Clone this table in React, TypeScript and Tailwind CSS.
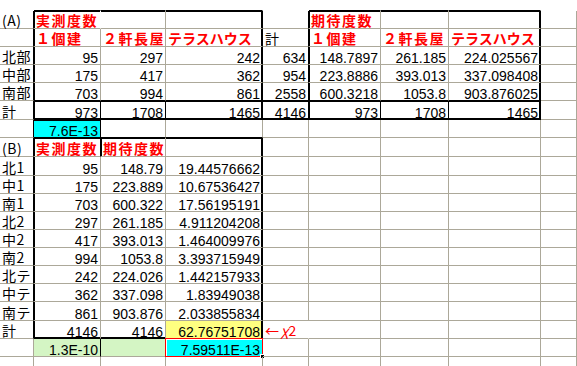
import React from "react";

type Col = "g" | "k" | "n";
interface Spec {
  text?: string;
  kind?: "num" | "jp" | "hdr" | "hdrk" | "note";
  rc?: Col;
  bc?: Col;
  sh?: string;
  bg?: string;
  sel?: boolean;
}

const SH: Record<string, string> = {
  "": "",
  t: "shadow-[inset_0_1px_0_#000]",
  l: "shadow-[inset_1px_0_0_#000]",
  b: "shadow-[inset_0_-1px_0_#000]",
  r: "shadow-[inset_-1px_0_0_#000]",
  tl: "shadow-[inset_1px_1px_0_#000]",
  tr: "shadow-[inset_-1px_1px_0_#000]",
  lb: "shadow-[inset_1px_-1px_0_#000]",
  rb: "shadow-[inset_-1px_-1px_0_#000]",
  tb: "shadow-[inset_0_1px_0_#000,inset_0_-1px_0_#000]",
  lr: "shadow-[inset_1px_0_0_#000,inset_-1px_0_0_#000]",
  tlb: "shadow-[inset_1px_1px_0_#000,inset_0_-1px_0_#000]",
  tbr: "shadow-[inset_-1px_1px_0_#000,inset_0_-1px_0_#000]",
  tlr: "shadow-[inset_1px_1px_0_#000,inset_-1px_0_0_#000]",
  lbr: "shadow-[inset_1px_-1px_0_#000,inset_-1px_0_0_#000]",
  tlbr: "shadow-[inset_0_0_0_1px_#000]",
};

const RC: Record<Col, string> = {
  g: "border-r-[#aca899]",
  k: "border-r-black",
  n: "border-r-transparent",
};
const BC: Record<Col, string> = {
  g: "border-b-[#aca899]",
  k: "border-b-black",
  n: "border-b-transparent",
};

const num = (text: string, o: Spec = {}): Spec => ({ text, kind: "num", ...o });
const jp = (text: string, o: Spec = {}): Spec => ({ text, kind: "jp", ...o });
const hd = (text: string, o: Spec = {}): Spec => ({ text, kind: "hdr", ...o });
const hk = (text: string, o: Spec = {}): Spec => ({ text, kind: "hdrk", ...o });

const YELLOW = "bg-[#ffff80]";
const GREEN = "bg-[#d4f5c4]";
const CYAN = "bg-[#00ffff]";

const rows: Spec[][] = [];

rows.push([
  { rc: "n", bc: "n" },
  { rc: "n", bc: "k" },
  { rc: "n", bc: "k" },
  { rc: "n", bc: "k" },
  { rc: "n", bc: "n" },
  { rc: "n", bc: "k" },
  { rc: "n", bc: "k" },
  { rc: "n", bc: "k" },
  { rc: "n", bc: "n" },
]);

rows.push([
  jp("(A)", { rc: "k" }),
  hd("実測度数", { rc: "n", sh: "tl" }),
  { sh: "t" },
  { sh: "tr", rc: "k" },
  { rc: "k" },
  hd("期待度数", { sh: "tl" }),
  { sh: "t" },
  { sh: "tr", rc: "k" },
  {},
]);

rows.push([
  { rc: "k" },
  hd("１個建", { sh: "l" }),
  hd("２軒長屋"),
  hk("テラスハウス", { sh: "r", rc: "k" }),
  jp("計", { rc: "k" }),
  hd("１個建", { sh: "l" }),
  hd("２軒長屋"),
  hk("テラスハウス", { sh: "r", rc: "k" }),
  {},
]);

const topData = [
  ["北部", "95", "297", "242", "634", "148.7897", "261.185", "224.025567"],
  ["中部", "175", "417", "362", "954", "223.8886", "393.013", "337.098408"],
  ["南部", "703", "994", "861", "2558", "600.3218", "1053.8", "903.876025"],
];
topData.forEach((d, i) => {
  const last = i === topData.length - 1;
  const b: Col = last ? "k" : "g";
  rows.push([
    jp(d[0], { rc: "k" }),
    num(d[1], { sh: "l", bc: b }),
    num(d[2], { bc: b }),
    num(d[3], { sh: "r", rc: "k", bc: b }),
    num(d[4], { rc: "k", bc: b }),
    num(d[5], { sh: "l", bc: b }),
    num(d[6], { bc: b }),
    num(d[7], { sh: "r", rc: "k", bc: b }),
    {},
  ]);
});

rows.push([
  jp("計", { rc: "k" }),
  num("973", { sh: "tlb", bc: "k", rc: "k" }),
  num("1708", { sh: "tb", bc: "k", rc: "k" }),
  num("1465", { sh: "tbr", rc: "k", bc: "k" }),
  num("4146", { sh: "tb", rc: "k", bc: "k" }),
  num("973", { sh: "tlb", bc: "k", rc: "k" }),
  num("1708", { sh: "tb", bc: "k", rc: "k" }),
  num("1465", { sh: "tbr", rc: "k", bc: "k" }),
  {},
]);

rows.push([
  { rc: "k" },
  num("7.6E-13", { sh: "t", bg: CYAN, rc: "k", bc: "k" }),
  { bc: "k" },
  { bc: "k" },
  {},
  {},
  {},
  {},
  {},
]);

rows.push([
  jp("(B)", { rc: "k" }),
  hd("実測度数", { sh: "tl", rc: "k" }),
  hd("期待度数", { sh: "tl" }),
  { sh: "tr", rc: "k" },
  {},
  {},
  {},
  {},
  {},
]);

const botData = [
  ["北1", "95", "148.79", "19.44576662"],
  ["中1", "175", "223.889", "10.67536427"],
  ["南1", "703", "600.322", "17.56195191"],
  ["北2", "297", "261.185", "4.911204208"],
  ["中2", "417", "393.013", "1.464009976"],
  ["南2", "994", "1053.8", "3.393715949"],
  ["北テ", "242", "224.026", "1.442157933"],
  ["中テ", "362", "337.098", "1.83949038"],
  ["南テ", "861", "903.876", "2.033855834"],
];
botData.forEach((d) => {
  rows.push([
    jp(d[0], { rc: "k" }),
    num(d[1], { sh: "l" }),
    num(d[2]),
    num(d[3], { sh: "r", rc: "k" }),
    {},
    {},
    {},
    {},
    {},
  ]);
});

rows.push([
  jp("計", { rc: "k" }),
  num("4146", { sh: "lb", bc: "k" }),
  num("4146", { sh: "b", bc: "k" }),
  num("62.76751708", { sh: "r", rc: "k", bc: "k", bg: YELLOW }),
  { text: "←χ2", kind: "note", rc: "n" },
  {},
  {},
  {},
  {},
]);

rows.push([
  {},
  num("1.3E-10", { bg: GREEN, rc: "k" }),
  { bg: GREEN },
  num("7.59511E-13", { bg: CYAN, sel: true }),
  {},
  {},
  {},
  {},
  {},
]);

rows.push([
  { bc: "n" },
  { bc: "n" },
  { bc: "n" },
  { bc: "n" },
  { bc: "n" },
  { bc: "n" },
  { bc: "n" },
  { bc: "n" },
  { bc: "n" },
]);

function Cell({ s }: { s: Spec }) {
  const rc = RC[s.rc ?? "g"];
  const bc = BC[s.bc ?? "g"];
  const sh = SH[s.sh ?? ""];
  const bg = s.bg ?? "";
  const k = s.kind;
  const align = k === "num" ? "justify-end pr-[2px]" : "justify-start pl-[2px]";
  let textCls = "";
  if (k === "num") textCls = "font-['Liberation_Sans',sans-serif] text-[14px] leading-[11px] text-black";
  else if (k === "jp")
    textCls = "font-['Noto_Sans_CJK_JP',sans-serif] text-[14px] leading-[16px] tracking-[0.5px] text-black";
  else if (k === "hdr")
    textCls =
      "font-['Noto_Sans_CJK_JP',sans-serif] font-bold text-[14px] leading-[16px] tracking-[1.5px] text-[#ff0000]";
  else if (k === "hdrk")
    textCls = "font-['Noto_Sans_CJK_JP',sans-serif] font-bold text-[14px] leading-[16px] text-[#ff0000]";
  else if (k === "note")
    textCls = "font-['Noto_Sans_CJK_JP',sans-serif] text-[14px] leading-[16px] text-[#ff0000]";
  return (
    <div
      className={`relative flex items-end whitespace-nowrap border-r border-b ${rc} ${bc} ${sh} ${bg} ${align}`}
    >
      {s.text ? (
        k === "note" ? (
          <span className={textCls}>
            ←<span className="ml-[2px] italic">χ</span>2
          </span>
        ) : (
          <span className={textCls}>{s.text}</span>
        )
      ) : null}
      {s.sel ? (
        <>
          <div className="pointer-events-none absolute -left-px -top-px -right-px -bottom-px border border-[#ff0000]" />
          <div className="pointer-events-none absolute inset-0 border border-white border-r-0 border-b-0" />
          <div className="absolute -right-[3px] -bottom-[3px] h-[5px] w-[5px] border border-white bg-black" />
        </>
      ) : null}
    </div>
  );
}

export default function App() {
  return (
    <div className="h-[366px] w-[577px] overflow-hidden bg-white">
      <div className="grid grid-cols-[34px_67px_65px_97px_46px_72px_68px_92px_1fr] grid-rows-[11px_18px_18px_18px_18px_18px_19px_18px_19px_19px_18px_18px_18px_18px_18px_18px_18px_19px_18px_18px_18px]">
        {rows.map((r, ri) => r.map((s, ci) => <Cell key={`${ri}-${ci}`} s={s} />))}
      </div>
    </div>
  );
}
